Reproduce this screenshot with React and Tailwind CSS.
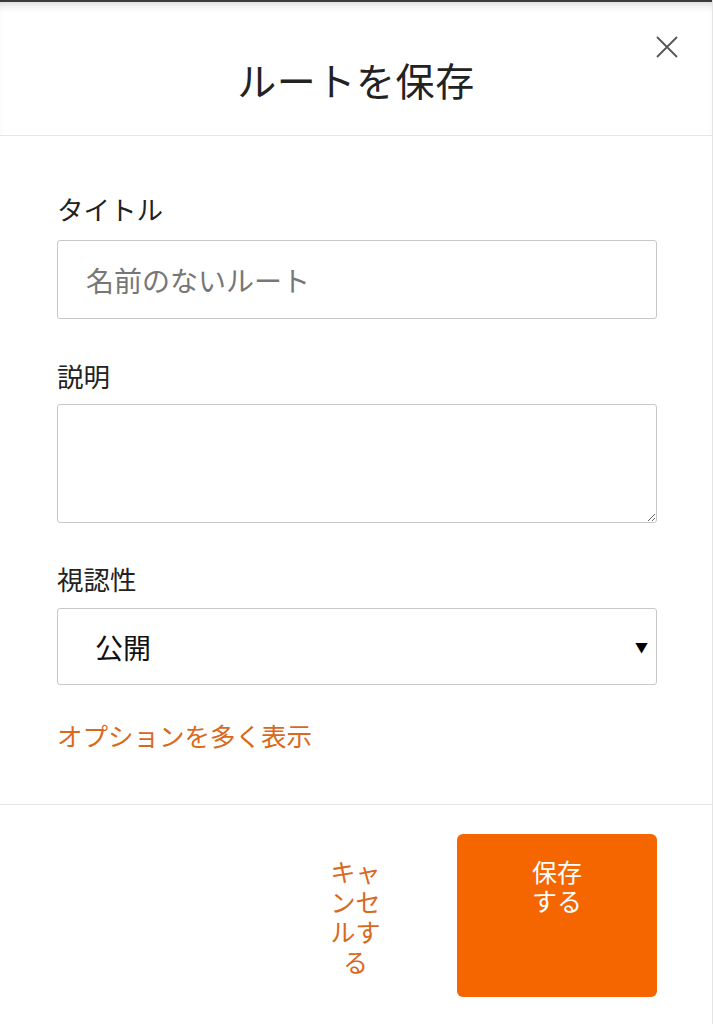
import React from 'react';

const font = { fontFamily: '"Noto Sans CJK JP", "Noto Sans", sans-serif' };

const SaveRouteDialog = () => {
  return (
    <div
      className="min-h-[1024px] w-full bg-white border-r border-[#e4e4e4] text-[#222]"
      style={font}
    >
      {/* Header */}
      <div className="relative h-[136px] border-t-2 border-[#3a3a3a] border-b border-b-[#e6e6e6] shadow-[inset_0_8px_10px_-6px_rgba(0,0,0,0.18)] flex items-center justify-center">
        <h1 className="text-[39px] leading-none font-normal text-[#222] mt-[22px] tracking-[0.6px]">ルートを保存</h1>
        <button className="absolute right-[33px] top-[33px] w-[24px] h-[24px] flex items-center justify-center">
          <svg width="24" height="24" viewBox="0 0 24 24" fill="none" stroke="#555" strokeWidth="1.8">
            <path d="M2 2 L22 22 M22 2 L2 22" />
          </svg>
        </button>
      </div>

      {/* Body */}
      <div className="pl-[57px] pr-[55px] pt-[55px] pb-[51px] border-b border-[#e6e6e6]">
        <label className="block h-9 leading-9 text-[26.5px] mb-[13px]">タイトル</label>
        <input
          className="block w-full h-[79px] border border-[#c8c8c8] rounded-[3px] px-[28px] text-[28px] outline-none placeholder:text-[#777]"
          placeholder="名前のないルート"
        />

        <label className="block h-9 leading-9 text-[26.5px] mt-[39px] mb-[10px]">説明</label>
        <textarea className="block w-full h-[119px] border border-[#c8c8c8] rounded-[3px] px-[28px] py-3 text-[26px] outline-none" />

        <label className="block h-9 leading-9 text-[26.5px] mt-[38px] mb-[11px]">視認性</label>
        <div className="relative h-[77px] border border-[#c8c8c8] rounded-[3px] flex items-center pl-[37px]">
          <span className="text-[28px] text-[#111]">公開</span>
          <span className="absolute right-[8px] top-1/2 -translate-y-1/2 text-[13px] text-black">▼</span>
        </div>

        <a className="block h-9 leading-9 text-[25.5px] text-[#d9691c] mt-[32px]">オプションを多く表示</a>
      </div>

      {/* Footer */}
      <div className="flex justify-end items-start gap-[76px] pr-[55px] pt-[29px]">
        <button className="w-[51px] mt-[22px] text-[25px] leading-[30px] text-[#d9691c] text-center break-all">
          キャンセルする
        </button>
        <button className="w-[200px] h-[163px] rounded-[6px] bg-[#f56600] text-white text-[25px] leading-[29px] pt-[23px] flex justify-center items-start">
          <span className="w-[51px] text-center break-all">保存する</span>
        </button>
      </div>
    </div>
  );
};

export default function App() {
  return <SaveRouteDialog />;
}
